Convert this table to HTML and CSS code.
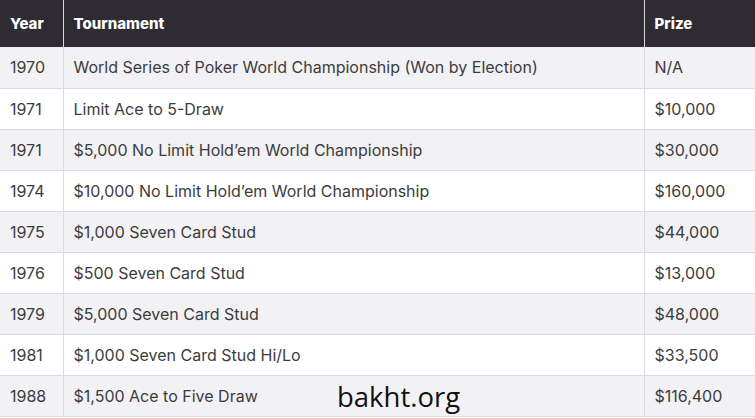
FILE: index.html
```html
<!DOCTYPE html>
<html>
<head>
<meta charset="utf-8">
<link rel="stylesheet" href="styles.css">
</head>
<body>
<div class="wrap">
<table class="results">
  <thead>
    <tr><th class="c-year">Year</th><th class="c-tour">Tournament</th><th class="c-prize">Prize</th></tr>
  </thead>
  <tbody>
    <tr><td>1970</td><td>World Series of Poker World Championship (Won by Election)</td><td>N/A</td></tr>
    <tr><td>1971</td><td>Limit Ace to 5-Draw</td><td>$10,000</td></tr>
    <tr><td>1971</td><td>$5,000 No Limit Hold’em World Championship</td><td>$30,000</td></tr>
    <tr><td>1974</td><td>$10,000 No Limit Hold’em World Championship</td><td>$160,000</td></tr>
    <tr><td>1975</td><td>$1,000 Seven Card Stud</td><td>$44,000</td></tr>
    <tr><td>1976</td><td>$500 Seven Card Stud</td><td>$13,000</td></tr>
    <tr><td>1979</td><td>$5,000 Seven Card Stud</td><td>$48,000</td></tr>
    <tr><td>1981</td><td>$1,000 Seven Card Stud Hi/Lo</td><td>$33,500</td></tr>
    <tr><td>1988</td><td>$1,500 Ace to Five Draw</td><td>$116,400</td></tr>
  </tbody>
</table>
<div class="watermark">bakht.org</div>
</div>
</body>
</html>
```
FILE: styles.css
```css
html, body {
  margin: 0;
  padding: 0;
  background: #ffffff;
}
.wrap {
  position: relative;
  width: 755px;
  height: 418px;
  overflow: hidden;
}
.results {
  border-collapse: collapse;
  width: 755px;
  table-layout: fixed;
  font-family: Inter, "Liberation Sans", sans-serif;
  font-size: 16px;
  color: #3c3c3e;
}
.c-year { width: 63px; }
.c-prize { width: 111px; }
.results th {
  background: #2e2c32;
  color: #ffffff;
  font-weight: 800;
  font-size: 15px;
  text-align: left;
  height: 47px;
  padding: 0 10px;
  box-sizing: border-box;
  border-left: 1px solid #d8d8dc;
}
.results th:first-child { border-left: none; }
.results td {
  height: 41px;
  padding: 0 10px;
  box-sizing: border-box;
  border-left: 1px solid #dcdcdf;
  border-bottom: 1px solid #dcdcdf;
  white-space: nowrap;
}
.results td:first-child { border-left: none; }
.results tbody tr:nth-child(odd) td { background: #f2f1f3; }
.results tbody tr:nth-child(even) td { background: #ffffff; }
.watermark {
  position: absolute;
  left: 337px;
  top: 380px;
  font-family: "Open Sans", "Noto Sans", sans-serif;
  font-size: 27.5px;
  color: #111111;
  line-height: 34px;
}
```
